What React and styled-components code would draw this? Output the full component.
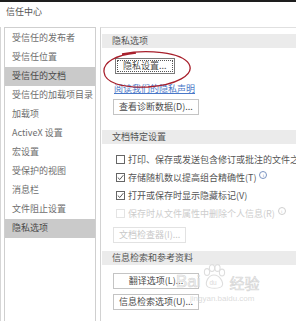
import styled, { createGlobalStyle } from "styled-components";

const GlobalStyle = createGlobalStyle`
  html, body {
    margin: 0;
    padding: 0;
    background: #ffffff;
  }
  body {
    font-family: "Noto Sans CJK SC", "Noto Sans", sans-serif;
  }
`;

const navItems = [
  "受信任的发布者",
  "受信任位置",
  "受信任的文档",
  "受信任的加载项目录",
  "加载项",
  "ActiveX 设置",
  "宏设置",
  "受保护的视图",
  "消息栏",
  "文件阻止设置",
  "隐私选项",
];

const selected = ["受信任的文档", "隐私选项"];

const checks = [
  { label: "打印、保存或发送包含修订或批注的文件之前发出警告(W)", checked: false },
  { label: "存储随机数以提高组合精确性(T)", checked: true, info: true },
  { label: "打开或保存时显示隐藏标记(V)", checked: true },
  { label: "保存时从文件属性中删除个人信息(R)", checked: false, info: true, disabled: true },
];

const App = () => {
  return (
    <>
      <GlobalStyle />
      <Window>
        <Title>信任中心</Title>
        <Body>
          <Nav>
            {navItems.map((item) => (
              <NavItem key={item} active={selected.includes(item)}>
                {item}
              </NavItem>
            ))}
          </Nav>
          <Panel>
            <SectionHead>隐私选项</SectionHead>
            <Group>
              <FocusButton>隐私设置...</FocusButton>
              <Link>阅读我们的隐私声明</Link>
              <Button>查看诊断数据(D)...</Button>
            </Group>

            <SectionHead top={15}>文档特定设置</SectionHead>
            <CheckList>
              {checks.map((c) => (
                <CheckRow key={c.label} disabled={c.disabled}>
                  <Box checked={c.checked} disabled={c.disabled}>
                    {c.checked && (
                      <svg width="7" height="7" viewBox="0 0 7 7">
                        <path d="M0.8 3.6 L2.8 5.5 L6.3 1.2" fill="none" stroke="#444" strokeWidth="0.9" />
                      </svg>
                    )}
                  </Box>
                  <span>{c.label}</span>
                  {c.info && <Info disabled={c.disabled}>i</Info>}
                </CheckRow>
              ))}
            </CheckList>
            <Group top={5}>
              <Button disabled>文档检查器(I)...</Button>
            </Group>

            <SectionHead top={8}>信息检索和参考资料</SectionHead>
            <Group gap={5} top={8}>
              <Button wide>翻译选项(L)...</Button>
              <Button wide>信息检索选项(U)...</Button>
            </Group>
          </Panel>
        </Body>

        <Circle width="92" height="40" viewBox="0 0 92 40">
          <path
            d="M20 4 C44 -1 80 2 87 14 C93 25 74 35 46 37 C20 38 3 33 2 22 C1 12 14 5 34 3"
            fill="none"
            stroke="#a8202c"
            strokeWidth="1.3"
          />
        </Circle>

        <Watermark>
          <Mark>
            <span>Bai</span>
            <svg width="26" height="26" viewBox="0 0 26 26">
              <g fill="none" stroke="#dedede" strokeWidth="1.1">
                <ellipse cx="6" cy="8" rx="2.6" ry="3.4" />
                <ellipse cx="11" cy="4" rx="2.6" ry="3.4" />
                <ellipse cx="16.5" cy="4" rx="2.6" ry="3.4" />
                <ellipse cx="21" cy="8.5" rx="2.6" ry="3.4" />
                <path d="M13 11 C7 11 4 19 6 22 C8 25 19 25 21 22 C23 19 19 11 13 11 Z" />
              </g>
              <text x="8.5" y="21" fontSize="6.5" fill="#dadada" fontFamily="Liberation Sans, sans-serif">du</text>
            </svg>
            <Jing>经验</Jing>
          </Mark>
          <Url>jingyan.baidu.com</Url>
        </Watermark>
      </Window>
    </>
  );
};

export default App;

const Window = styled.div`
  position: relative;
  width: 296px;
  height: 321px;
  overflow: hidden;
  border-top: 2px solid #1e1e1e;
  box-sizing: border-box;
  background: #fff;
`;

const Title = styled.div`
  height: 25px;
  padding-left: 6px;
  font-size: 9px;
  line-height: 20px;
  color: #555;
`;

const Body = styled.div`
  display: flex;
  align-items: stretch;
  height: 300px;
  border-left: 1px solid #d6d6d6;
`;

const Nav = styled.div`
  width: 90px;
  margin-left: 3px;
  border: 1px solid #cfcfcf;
  border-bottom: none;
  padding-top: 1px;
  display: flex;
  flex-direction: column;
`;

const NavItem = styled.div`
  height: 19px;
  line-height: 18px;
  padding-left: 7px;
  font-size: 9px;
  white-space: nowrap;
  color: ${(p) => (p.active ? "#4a4a4a" : "#6e6e6e")};
  background: ${(p) => (p.active ? "#cacaca" : "transparent")};
`;

const Panel = styled.div`
  flex: 1;
  margin-left: 4px;
  border-left: 1px solid #d2d2d2;
  border-top: 1px solid #e0e0e0;
  padding-top: 6px;
  display: flex;
  flex-direction: column;
  min-width: 0;
`;

const SectionHead = styled.div`
  margin-top: ${(p) => p.top || 0}px;
  margin-left: 1px;
  height: 14px;
  line-height: 14px;
  padding-left: 10px;
  font-size: 9px;
  color: #555;
  background: #ebebeb;
`;

const Group = styled.div`
  display: flex;
  flex-direction: column;
  align-items: flex-start;
  gap: ${(p) => (p.gap ?? 4)}px;
  padding-left: 12px;
  margin-top: ${(p) => p.top ?? 10}px;
`;

const Button = styled.div`
  height: 16px;
  box-sizing: border-box;
  border: 1px solid ${(p) => (p.disabled ? "#e2e2e2" : "#c4c4c4")};
  background: #fff;
  font-size: 9px;
  line-height: 14px;
  color: ${(p) => (p.disabled ? "#c8c8c8" : "#4a4a4a")};
  padding: 0 5px;
  white-space: nowrap;
  width: ${(p) => (p.wide ? "86px" : "auto")};
  text-align: center;
`;

const FocusButton = styled(Button)`
  position: relative;
  border-color: #7a7a7a;
  padding: 0 7px;
  margin-left: 2px;
  &::after {
    content: "";
    position: absolute;
    inset: 1px;
    border: 1px dotted #555;
  }
`;

const Link = styled.div`
  font-size: 9px;
  line-height: 12px;
  color: #4a78c8;
  text-decoration: underline;
  margin: 5px 0 0 1px;
`;

const CheckList = styled.div`
  display: flex;
  flex-direction: column;
  padding-left: 15px;
  margin-top: 6px;
`;

const CheckRow = styled.div`
  display: flex;
  align-items: center;
  height: 18px;
  font-size: 9px;
  color: ${(p) => (p.disabled ? "#cdcdcd" : "#555")};
  white-space: nowrap;
`;

const Box = styled.div`
  width: 9px;
  height: 9px;
  box-sizing: border-box;
  border: 1px solid ${(p) => (p.disabled ? "#e4e4e4" : "#666")};
  margin-right: 3px;
  display: flex;
  align-items: center;
  justify-content: center;
  flex-shrink: 0;
`;

const Info = styled.span`
  display: inline-flex;
  align-items: center;
  justify-content: center;
  width: 6px;
  height: 6px;
  border: 1px solid ${(p) => (p.disabled ? "#cfcfcf" : "#7a93c0")};
  border-radius: 50%;
  font-size: 5px;
  line-height: 1;
  color: ${(p) => (p.disabled ? "#cfcfcf" : "#7a93c0")};
  margin-left: 3px;
  align-self: flex-start;
  margin-top: 3px;
  font-family: "Liberation Serif", serif;
`;

const Circle = styled.svg`
  position: absolute;
  left: 102px;
  top: 48px;
`;

const Watermark = styled.div`
  position: absolute;
  left: 176px;
  top: 262px;
  pointer-events: none;
`;

const Mark = styled.div`
  display: flex;
  align-items: flex-end;
  font-family: "Liberation Sans", sans-serif;
  font-size: 17px;
  color: rgba(236, 236, 236, 0.7);
  -webkit-text-stroke: 0.6px rgba(205, 205, 205, 0.8);
  line-height: 1;
`;

const Jing = styled.span`
  font-family: "Noto Sans CJK SC", sans-serif;
  font-size: 15px;
  margin-left: 3px;
`;

const Url = styled.div`
  font-family: "Liberation Sans", sans-serif;
  font-size: 8px;
  color: rgba(210, 210, 210, 0.8);
  margin: 4px 0 0 14px;
`;
